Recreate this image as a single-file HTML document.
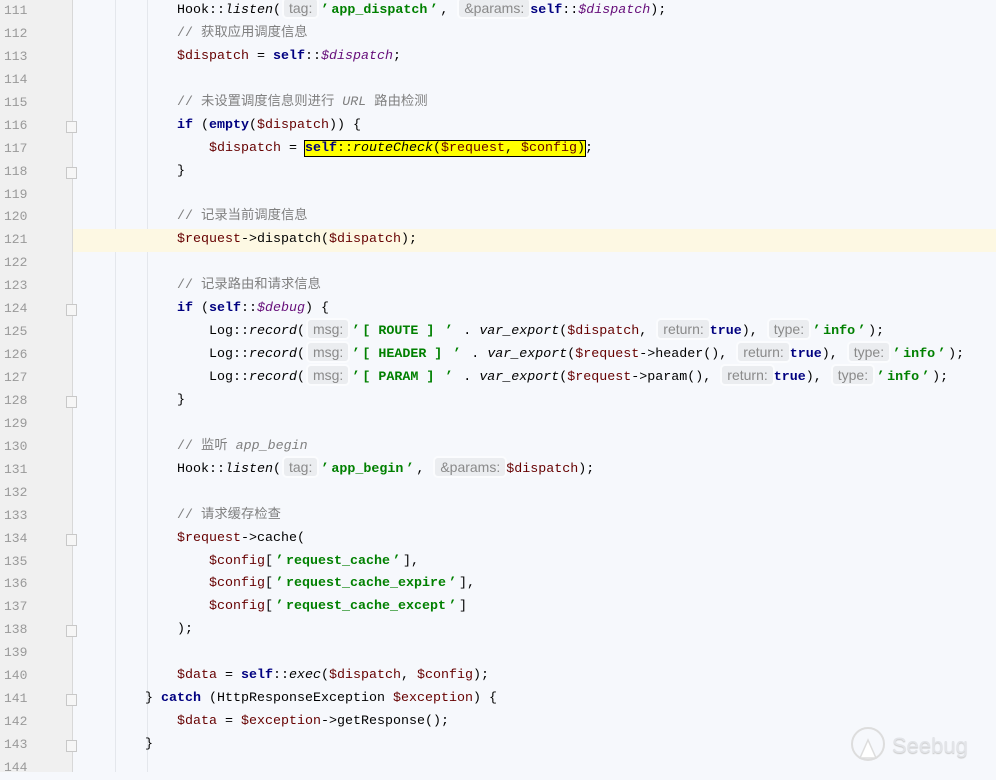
<!DOCTYPE html>
<html><head><meta charset="utf-8"><style>
html,body{margin:0;padding:0;width:996px;height:772px;overflow:hidden;background:#f6f8fc;}
#g{position:absolute;left:0;top:0;width:72px;height:772px;background:#f0f0f0;border-right:1px solid #d8d8d8;z-index:1}
#ed{position:absolute;left:0;top:0px;width:996px;z-index:2}
.l{position:relative;height:22.94px;line-height:22.94px;white-space:pre;font-family:"Liberation Mono","Noto Sans CJK SC",monospace;font-size:13.33px;color:#000;}
.n{position:absolute;left:4px;color:#999;font-size:13px;}
.c{position:absolute;left:145px;top:0;height:22.94px}
.cur::before{content:"";position:absolute;left:73px;right:0;top:0;bottom:0;background:#fdf8e3;}
.k{color:#000080;font-weight:bold}
.s{color:#008000;font-weight:bold}
.q{display:inline-block;width:13px;text-align:center;line-height:0}
.v{color:#660000}
.p{color:#660e7a;font-style:italic}
.i{font-style:italic}
.cm{color:#808080}
.h{font-family:"Liberation Sans",sans-serif;font-size:14px;line-height:0;color:#8a8a8a;background:#ebedf0;border-radius:3px;padding:1px 5px;margin:0 1px 0 3px;box-shadow:0 0 0 2px #fbfcfe;}
.y{background:#ffff00;outline:1px solid #000}
.f{position:absolute;left:66px;width:9px;height:10px;top:6px;border:1px solid #c8c8c8;background:#f6f6f6;}
.ig{position:absolute;top:0;width:1px;height:772px;background:#e4e7ec;z-index:1}
</style></head><body>
<div id="g"></div>
<div class="ig" style="left:115px"></div>
<div class="ig" style="left:147px"></div>
<div id="ed">
<div class="l"><span class="n">111</span><span class="c">    Hook::<span class="i">listen</span>(<span class="h">tag:</span><span class="s"><span class="q">’</span>app_dispatch<span class="q">’</span></span>, <span class="h">&amp;params:</span><span class="k">self</span>::<span class="p">$dispatch</span>);</span></div>
<div class="l"><span class="n">112</span><span class="c cm">    // 获取应用调度信息</span></div>
<div class="l"><span class="n">113</span><span class="c">    <span class="v">$dispatch</span> = <span class="k">self</span>::<span class="p">$dispatch</span>;</span></div>
<div class="l"><span class="n">114</span></div>
<div class="l"><span class="n">115</span><span class="c cm">    // 未设置调度信息则进行 <i>URL</i> 路由检测</span></div>
<div class="l"><span class="n">116</span><span class="f"></span><span class="c">    <span class="k">if</span> (<span class="k">empty</span>(<span class="v">$dispatch</span>)) {</span></div>
<div class="l"><span class="n">117</span><span class="c">        <span class="v">$dispatch</span> = <span class="y"><span class="k">self</span>::<span class="i">routeCheck</span>(<span class="v">$request</span>, <span class="v">$config</span>)</span>;</span></div>
<div class="l"><span class="n">118</span><span class="f"></span><span class="c">    }</span></div>
<div class="l"><span class="n">119</span></div>
<div class="l"><span class="n">120</span><span class="c cm">    // 记录当前调度信息</span></div>
<div class="l cur"><span class="n">121</span><span class="c">    <span class="v">$request</span>-&gt;dispatch(<span class="v">$dispatch</span>);</span></div>
<div class="l"><span class="n">122</span></div>
<div class="l"><span class="n">123</span><span class="c cm">    // 记录路由和请求信息</span></div>
<div class="l"><span class="n">124</span><span class="f"></span><span class="c">    <span class="k">if</span> (<span class="k">self</span>::<span class="p">$debug</span>) {</span></div>
<div class="l"><span class="n">125</span><span class="c">        Log::<span class="i">record</span>(<span class="h">msg:</span><span class="s"><span class="q">’</span>[ ROUTE ] <span class="q">’</span></span> . <span class="i">var_export</span>(<span class="v">$dispatch</span>, <span class="h">return:</span><span class="k">true</span>), <span class="h">type:</span><span class="s"><span class="q">’</span>info<span class="q">’</span></span>);</span></div>
<div class="l"><span class="n">126</span><span class="c">        Log::<span class="i">record</span>(<span class="h">msg:</span><span class="s"><span class="q">’</span>[ HEADER ] <span class="q">’</span></span> . <span class="i">var_export</span>(<span class="v">$request</span>-&gt;header(), <span class="h">return:</span><span class="k">true</span>), <span class="h">type:</span><span class="s"><span class="q">’</span>info<span class="q">’</span></span>);</span></div>
<div class="l"><span class="n">127</span><span class="c">        Log::<span class="i">record</span>(<span class="h">msg:</span><span class="s"><span class="q">’</span>[ PARAM ] <span class="q">’</span></span> . <span class="i">var_export</span>(<span class="v">$request</span>-&gt;param(), <span class="h">return:</span><span class="k">true</span>), <span class="h">type:</span><span class="s"><span class="q">’</span>info<span class="q">’</span></span>);</span></div>
<div class="l"><span class="n">128</span><span class="f"></span><span class="c">    }</span></div>
<div class="l"><span class="n">129</span></div>
<div class="l"><span class="n">130</span><span class="c cm">    // 监听 <i>app_begin</i></span></div>
<div class="l"><span class="n">131</span><span class="c">    Hook::<span class="i">listen</span>(<span class="h">tag:</span><span class="s"><span class="q">’</span>app_begin<span class="q">’</span></span>, <span class="h">&amp;params:</span><span class="v">$dispatch</span>);</span></div>
<div class="l"><span class="n">132</span></div>
<div class="l"><span class="n">133</span><span class="c cm">    // 请求缓存检查</span></div>
<div class="l"><span class="n">134</span><span class="f"></span><span class="c">    <span class="v">$request</span>-&gt;cache(</span></div>
<div class="l"><span class="n">135</span><span class="c">        <span class="v">$config</span>[<span class="s"><span class="q">’</span>request_cache<span class="q">’</span></span>],</span></div>
<div class="l"><span class="n">136</span><span class="c">        <span class="v">$config</span>[<span class="s"><span class="q">’</span>request_cache_expire<span class="q">’</span></span>],</span></div>
<div class="l"><span class="n">137</span><span class="c">        <span class="v">$config</span>[<span class="s"><span class="q">’</span>request_cache_except<span class="q">’</span></span>]</span></div>
<div class="l"><span class="n">138</span><span class="f"></span><span class="c">    );</span></div>
<div class="l"><span class="n">139</span></div>
<div class="l"><span class="n">140</span><span class="c">    <span class="v">$data</span> = <span class="k">self</span>::<span class="i">exec</span>(<span class="v">$dispatch</span>, <span class="v">$config</span>);</span></div>
<div class="l"><span class="n">141</span><span class="f"></span><span class="c">} <span class="k">catch</span> (HttpResponseException <span class="v">$exception</span>) {</span></div>
<div class="l"><span class="n">142</span><span class="c">    <span class="v">$data</span> = <span class="v">$exception</span>-&gt;getResponse();</span></div>
<div class="l"><span class="n">143</span><span class="f"></span><span class="c">}</span></div>
<div class="l"><span class="n">144</span></div>
</div>
<svg style="position:absolute;left:850px;top:726px;z-index:3" width="40" height="40" viewBox="0 0 40 40"><circle cx="18" cy="18" r="16" fill="none" stroke="#ddd" stroke-width="2"/><path d="M18 14 L10 32 L26 32 Z" fill="#fff" stroke="#ddd" stroke-width="1.5"/></svg>
<div style="position:absolute;left:892px;top:733px;z-index:3;font-family:'Liberation Sans',sans-serif;font-size:22px;color:#e2e4e8;text-shadow:0 1px 1px #c8c8c8">Seebug</div>
</body></html>
